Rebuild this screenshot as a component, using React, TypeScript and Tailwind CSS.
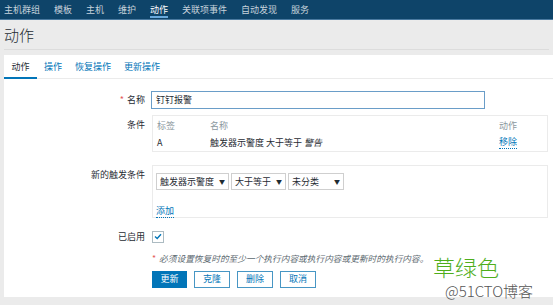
import React from "react";

const F = { fontFamily: '"Noto Sans CJK SC", "Noto Sans", sans-serif' };

function Sel({ label, w }: { label: string; w: string }) {
  return (
    <div className={`flex items-center justify-between h-[17px] border border-[#cfcfcf] bg-white px-[3px] ${w}`}>
      <span className="text-[9px] text-[#1f2c33]">{label}</span>
      <span className="text-[6px] text-[#1f2c33]">▼</span>
    </div>
  );
}

export default function App() {
  const nav = ["主机群组", "模板", "主机", "维护", "动作", "关联项事件", "自动发现", "服务"];
  return (
    <div className="relative w-[553px] h-[305px] overflow-hidden bg-[#ebebeb] text-[#1f2c33]" style={F}>
      {/* Top nav */}
      <div className="h-[20px] bg-[#0e4469] border-b border-[#4a7aa0] flex items-stretch pl-[4px] gap-[14px]">
        {nav.map((n) => (
          <div key={n} className="relative flex items-center">
            <span className={`text-[9px] ${n === "动作" ? "text-white" : "text-[#c7d3dc]"}`}>{n}</span>
            {n === "动作" && <div className="absolute left-0 right-0 bottom-[1px] h-[2px] bg-[#69a9dc]" />}
          </div>
        ))}
      </div>
      {/* Title */}
      <div className="mx-[4px] h-[30px] border-b border-[#dcdcdc] flex items-center">
        <span className="text-[15px] leading-none font-light">动作</span>
      </div>
      {/* Panel */}
      <div className="ml-[4px] mt-[5px] bg-white h-[242px]">
        <div className="h-[24px] border-b border-[#ebebeb] flex items-stretch">
          <div className="relative w-[33px] flex items-center justify-center">
            <span className="text-[9px] text-[#1f2c33]">动作</span>
            <div className="absolute left-0 right-0 bottom-[-1px] h-[2px] bg-[#0275b8]" />
          </div>
          <div className="flex items-center gap-[13px] pl-[7px]">
            <span className="text-[9px] text-[#0275b8]">操作</span>
            <span className="text-[9px] text-[#0275b8]">恢复操作</span>
            <span className="text-[9px] text-[#0275b8]">更新操作</span>
          </div>
        </div>
        {/* Form */}
        <div className="pt-[12px] flex flex-col">
          {/* Name */}
          <div className="flex items-center">
            <div className="w-[142px] text-right text-[9px] pr-[1px]">
              <span className="text-[#e45959] mr-[3px]">*</span>名称
            </div>
            <div className="ml-[5px] w-[334px] h-[18px] border border-[#6a9dc8] flex items-center px-[4px]">
              <span className="text-[9px]">钉钉报警</span>
            </div>
          </div>
          {/* Conditions */}
          <div className="flex mt-[6px]">
            <div className="w-[142px] text-right text-[9px] pr-[1px] pt-[3px]">条件</div>
            <div className="ml-[6px] w-[396px] h-[37px] border border-[#ebebeb] relative text-[9px]">
              <div className="flex pt-[3px] text-[#8b979e]">
                <span className="w-[57px] pl-[4px]">标签</span>
                <span className="w-[289px]">名称</span>
                <span>动作</span>
              </div>
              <div className="flex pt-[3px]">
                <span className="w-[57px] pl-[4px]">A</span>
                <span className="w-[289px]">
                  触发器示警度 大于等于 <i>警告</i>
                </span>
                <span className="text-[#0275b8] border-b border-dotted border-[#0275b8] leading-[12px]">移除</span>
              </div>
            </div>
          </div>
          {/* New trigger condition */}
          <div className="flex mt-[13px]">
            <div className="w-[142px] text-right text-[9px] pr-[1px] pt-[3px]">新的触发条件</div>
            <div className="ml-[6px] w-[396px] h-[53px] border border-[#ebebeb] px-[3px] pt-[7px]">
              <div className="flex gap-[2px]">
                <Sel label="触发器示警度" w="w-[73px]" />
                <Sel label="大于等于" w="w-[55px]" />
                <Sel label="未分类" w="w-[56px]" />
              </div>
              <div className="mt-[5px]">
                <span className="text-[9px] text-[#0275b8] border-b border-dotted border-[#0275b8] leading-[12px]">添加</span>
              </div>
            </div>
          </div>
          {/* Enabled */}
          <div className="flex items-center mt-[12px]">
            <div className="w-[142px] text-right text-[9px] pr-[1px]">已启用</div>
            <div className="ml-[6px] w-[12px] h-[12px] border border-[#acbbc2] flex items-center justify-center">
              <svg width="8" height="7" viewBox="0 0 8 7">
                <path d="M1 3.5 L3.2 5.5 L7 1.2" fill="none" stroke="#0275b8" strokeWidth="1.4" />
              </svg>
            </div>
          </div>
          {/* Warning */}
          <div className="ml-[148px] mt-[8px] text-[8.7px] text-[#5c6970] italic leading-[14px]">
            <span className="text-[#e45959] not-italic mr-[3px]">*</span>
            必须设置恢复时的至少一个执行内容或执行内容或更新时的执行内容。
          </div>
          {/* Buttons */}
          <div className="ml-[148px] mt-[5px] flex gap-[7px]">
            <div className="w-[35px] h-[17px] bg-[#0275b8] text-white text-[9px] flex items-center justify-center">更新</div>
            <div className="w-[36px] h-[17px] border border-[#4796c4] text-[#0275b8] text-[9px] flex items-center justify-center">克隆</div>
            <div className="w-[36px] h-[17px] border border-[#4796c4] text-[#0275b8] text-[9px] flex items-center justify-center">删除</div>
            <div className="w-[36px] h-[17px] border border-[#4796c4] text-[#0275b8] text-[9px] flex items-center justify-center">取消</div>
          </div>
        </div>
      </div>
      {/* Watermark overlay */}
      <div className="absolute left-[433px] top-[255px] h-[23px] text-[22px] leading-[23px] text-[#4fae1b] font-light">草绿色</div>
      <div className="absolute left-[445px] top-[283px] h-[15px] text-[15px] leading-[15px] text-[#555] font-light">@51CTO博客</div>
    </div>
  );
}
